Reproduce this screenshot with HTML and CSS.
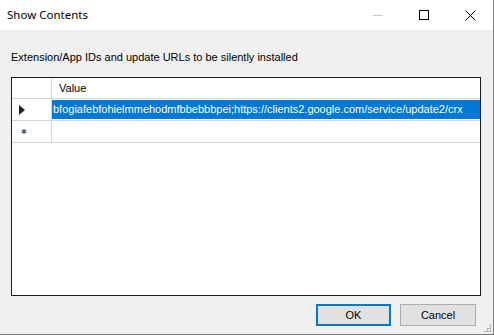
FILE: index.html
```html
<!DOCTYPE html>
<html lang="en">
<head>
    <meta charset="UTF-8">
    <title>Show Contents</title>
    <link rel="stylesheet" href="styles.css">
</head>
<body>
    <div class="window">
        <div class="titlebar">
            <div class="title">Show Contents</div>
            <div class="controls">
                <span class="ctl minimize"><svg width="10" height="10" viewBox="0 0 10 10"><path d="M0 5.5h10" stroke="#c8c8c8" stroke-width="1"/></svg></span>
                <span class="ctl"><svg width="10" height="10" viewBox="0 0 10 10"><rect x="0.5" y="0.5" width="9" height="9" fill="none" stroke="#000" stroke-width="1"/></svg></span>
                <span class="ctl"><svg width="11" height="11" viewBox="0 0 11 11"><path d="M0.5 0.5l10 10M10.5 0.5l-10 10" stroke="#000" stroke-width="1"/></svg></span>
            </div>
        </div>
        <div class="content">
            <div class="label">Extension/App IDs and update URLs to be silently installed</div>
            <div class="grid">
                <div class="row header">
                    <div class="rowhead"></div>
                    <div class="cell">Value</div>
                </div>
                <div class="row">
                    <div class="rowhead"><svg width="6" height="10" viewBox="0 0 6 10"><path d="M0 0l6 5-6 5z" fill="#222"/></svg></div>
                    <div class="cell selected">bfogiafebfohielmmehodmfbbebbbpei;https://clients2.google.com/service/update2/crx</div>
                </div>
                <div class="row">
                    <div class="rowhead"><span class="star">&#x2731;</span></div>
                    <div class="cell"></div>
                </div>
            </div>
            <div class="footer">
                <button class="btn default">OK</button>
                <button class="btn">Cancel</button>
            </div>
        </div>
        <div class="grip"></div>
    </div>
</body>
</html>
```

FILE: styles.css
```css
body {
    margin: 0;
    padding: 0;
    background-color: #ffffff;
    font-family: "Liberation Sans", Arial, sans-serif;
}
.window {
    position: relative;
    width: 493px;
    height: 334px;
    border-right: 1px solid #7a7a7a;
    border-bottom: 1px solid #7a7a7a;
    display: flex;
    flex-direction: column;
    background: #f0f0f0;
}
.titlebar {
    height: 30px;
    background: #ffffff;
    display: flex;
    align-items: center;
    justify-content: space-between;
}
.title {
    font-family: "Noto Sans", sans-serif;
    font-size: 11.5px;
    color: #000;
    padding-left: 7px;
    padding-bottom: 2px;
}
.controls {
    display: flex;
    height: 30px;
}
.ctl {
    width: 46px;
    display: flex;
    align-items: center;
    justify-content: center;
}
.content {
    flex: 1;
    display: flex;
    flex-direction: column;
    padding: 21px 12px 0 11px;
}
.label {
    font-size: 11px;
    color: #000;
    height: 13px;
    line-height: 13px;
}
.grid {
    margin-top: 13px;
    height: 217px;
    border: 1px solid #1a1a1a;
    background: #ffffff;
    display: flex;
    flex-direction: column;
}
.row {
    display: flex;
    height: 21px;
    border-bottom: 1px solid #d6d6d6;
}
.row.header {
    height: 20px;
}
.row.header .cell {
    line-height: 21px;
}
.rowhead {
    width: 40px;
    border-right: 1px solid #d6d6d6;
    display: flex;
    align-items: center;
    padding-left: 7px;
    box-sizing: border-box;
}
.star {
    font-size: 7px;
    color: #555;
    padding-left: 2px;
}
.cell {
    flex: 1;
    font-size: 11px;
    line-height: 19px;
    padding-left: 7px;
    white-space: nowrap;
    overflow: hidden;
}
.cell.selected {
    background: #0078d7;
    color: #fff;
    padding-left: 1px;
    margin: 1px 0;
}
.footer {
    display: flex;
    justify-content: flex-end;
    gap: 9px;
    margin-top: 8px;
    padding-right: 5px;
}
.btn {
    width: 76px;
    height: 22px;
    font-family: "Liberation Sans", Arial, sans-serif;
    font-size: 11px;
    background: #e1e1e1;
    border: 1px solid #adadad;
    color: #000;
    padding: 0;
}
.btn.default {
    width: 75px;
    border: 2px solid #0078d7;
}
.grip {
    position: absolute;
    right: 2px;
    bottom: 2px;
    width: 8px;
    height: 8px;
    background-image: radial-gradient(circle, #b8b8b8 1px, transparent 1.2px);
    background-size: 3px 3px;
    clip-path: polygon(100% 0, 100% 100%, 0 100%);
}
```
